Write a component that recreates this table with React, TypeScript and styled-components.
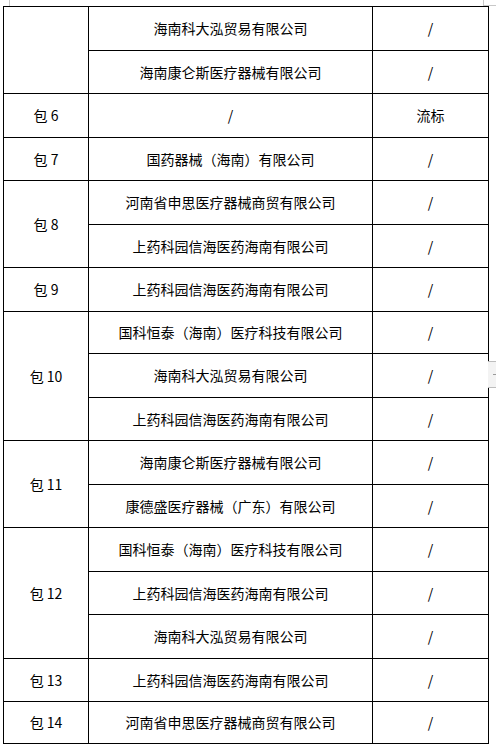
import styled, { createGlobalStyle } from 'styled-components';

const GlobalStyle = createGlobalStyle`
  html, body {
    margin: 0;
    padding: 0;
    background: #ffffff;
  }
  body {
    font-family: 'Noto Sans CJK SC', 'Noto Sans', sans-serif;
    color: #000;
  }
`;

const Page = styled.div`
  position: relative;
  width: 496px;
  height: 752px;
  padding: 6px 0 0 3px;
  box-sizing: border-box;
  overflow: hidden;
`;

const Table = styled.table`
  border-collapse: collapse;
  table-layout: fixed;
  width: 486px;
`;

const Cell = styled.td`
  border: 1px solid #000;
  padding: 0 0 1px;
  text-align: center;
  vertical-align: middle;
  font-size: 14px;
  line-height: 16px;
  white-space: nowrap;
`;

const Row = styled.tr<{ $h: number }>`
  height: ${(p) => p.$h}px;
`;

// little page marks, as in the document view
const CornerMark = styled.div<{ $side: 'left' | 'right' }>`
  position: absolute;
  top: 0;
  ${(p) => (p.$side === 'left' ? 'left: 9px;' : 'left: 483px;')}
  width: ${(p) => (p.$side === 'left' ? 1 : 13)}px;
  height: 6px;
  border-left: 1px solid #c8c8c8;
  ${(p) => (p.$side === 'right' ? 'border-bottom: 1px solid #c8c8c8; height: 5px;' : '')}
`;

const SideTab = styled.div`
  position: absolute;
  left: 488px;
  top: 361px;
  width: 8px;
  height: 27px;
  background: #f3f3f3;
  border-top: 1px solid #bdbdbd;
  border-bottom: 1px solid #bdbdbd;
  box-sizing: border-box;

  &::after {
    content: '';
    position: absolute;
    left: 5px;
    top: 12px;
    width: 3px;
    height: 1px;
    background: #9a9a9a;
  }
`;

interface Bid {
  company: string;
  result: string;
}

interface Pack {
  label: string;
  bids: Bid[];
}

const packs: Pack[] = [
  {
    label: '',
    bids: [
      { company: '海南科大泓贸易有限公司', result: '/' },
      { company: '海南康仑斯医疗器械有限公司', result: '/' },
    ],
  },
  { label: '包 6', bids: [{ company: '/', result: '流标' }] },
  { label: '包 7', bids: [{ company: '国药器械（海南）有限公司', result: '/' }] },
  {
    label: '包 8',
    bids: [
      { company: '河南省申思医疗器械商贸有限公司', result: '/' },
      { company: '上药科园信海医药海南有限公司', result: '/' },
    ],
  },
  { label: '包 9', bids: [{ company: '上药科园信海医药海南有限公司', result: '/' }] },
  {
    label: '包 10',
    bids: [
      { company: '国科恒泰（海南）医疗科技有限公司', result: '/' },
      { company: '海南科大泓贸易有限公司', result: '/' },
      { company: '上药科园信海医药海南有限公司', result: '/' },
    ],
  },
  {
    label: '包 11',
    bids: [
      { company: '海南康仑斯医疗器械有限公司', result: '/' },
      { company: '康德盛医疗器械（广东）有限公司', result: '/' },
    ],
  },
  {
    label: '包 12',
    bids: [
      { company: '国科恒泰（海南）医疗科技有限公司', result: '/' },
      { company: '上药科园信海医药海南有限公司', result: '/' },
      { company: '海南科大泓贸易有限公司', result: '/' },
    ],
  },
  { label: '包 13', bids: [{ company: '上药科园信海医药海南有限公司', result: '/' }] },
  { label: '包 14', bids: [{ company: '河南省申思医疗器械商贸有限公司', result: '/' }] },
];

// measured row pitch from the scan
const heights = [44, 43, 44, 43, 44, 43, 44, 42, 44, 43, 44, 43, 44, 43, 44, 43, 42];

export default function App() {
  let n = 0;
  return (
    <>
      <GlobalStyle />
      <Page>
        <CornerMark $side="left" />
        <CornerMark $side="right" />
        <Table>
          <colgroup>
            <col style={{ width: 85 }} />
            <col style={{ width: 284 }} />
            <col style={{ width: 116 }} />
          </colgroup>
          <tbody>
            {packs.map((pack) =>
              pack.bids.map((bid, i) => {
                const h = heights[n++];
                return (
                  <Row key={`${pack.label}-${i}`} $h={h}>
                    {i === 0 && <Cell rowSpan={pack.bids.length}>{pack.label}</Cell>}
                    <Cell>{bid.company}</Cell>
                    <Cell>{bid.result}</Cell>
                  </Row>
                );
              })
            )}
          </tbody>
        </Table>
        <SideTab />
      </Page>
    </>
  );
}
